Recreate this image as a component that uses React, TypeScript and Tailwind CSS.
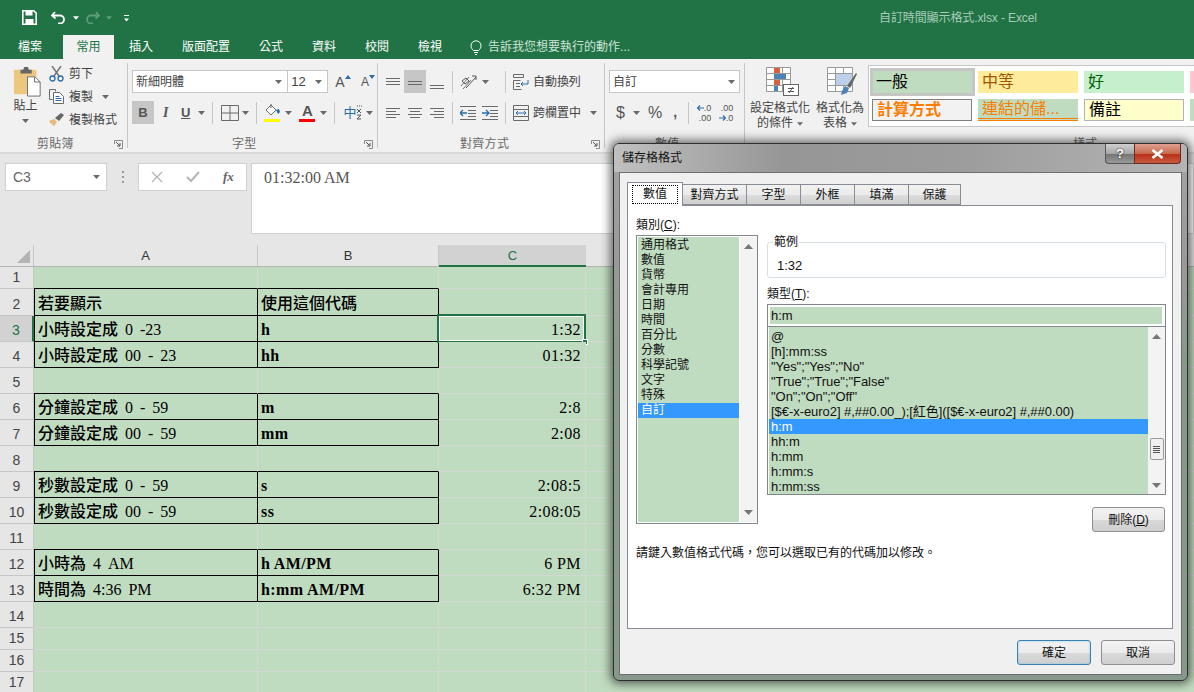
import React from "react";

const Caret = ({ c = "#6a6a6a", w = 7, className = "" }: { c?: string; w?: number; className?: string }) => (
  <svg width={w} height={4} viewBox="0 0 7 4" className={"shrink-0 " + className}>
    <path d="M0 0h7L3.5 4z" fill={c} />
  </svg>
);

const Lines = ({ l, w = 16, h = 16, c = "#6a6a6a" }: { l: number[][]; w?: number; h?: number; c?: string }) => (
  <svg width={w} height={h} viewBox={`0 0 ${w} ${h}`} className="shrink-0">
    {l.map((a, i) => (
      <rect key={i} x={a[0]} y={a[2]} width={a[1] - a[0]} height={1} fill={c} />
    ))}
  </svg>
);

const VSep = ({ ml, mr, h = 22 }: { ml: string; mr: string; h?: number }) => (
  <div className={`w-px bg-[#c6c6c6] shrink-0 ${ml} ${mr}`} style={{ height: h }} />
);

const Launcher = () => (
  <svg width={9} height={9} viewBox="0 0 9 9" className="shrink-0">
    <path d="M.5 4V.5H8.5V8.5H5" fill="none" stroke="#8a8a8a" />
    <path d="M2 2l4 4M6 3v3H3" fill="none" stroke="#555" />
  </svg>
);

const GroupLabel = ({ t, launcher, ml }: { t: string; launcher?: boolean; ml: string }) => (
  <div className="mt-auto h-[18px] pt-[1px] flex items-center text-[12px] leading-[18px] text-[#6a6a6a]">
    <span className={ml + " tracking-[0.3px]"}>{t}</span>
    {launcher && <span className="ml-auto mr-[4px] mt-[2px] flex"><Launcher /></span>}
  </div>
);

const Sep = () => <div className="w-px h-[85px] mt-[4px] bg-[#c6c6c6] shrink-0" />;

const rows = [
  { n: 1, h: 22, above: true },
  { n: 2, h: 27, box: true, a: "若要顯示", b: "使用這個代碼" },
  { n: 3, h: 26, box: true, a: "小時設定成 0 -23", b: "h", c: "1:32", sel: true },
  { n: 4, h: 26, box: true, a: "小時設定成 00 - 23", b: "hh", c: "01:32" },
  { n: 5, h: 26, above: true },
  { n: 6, h: 26, box: true, a: "分鐘設定成 0 - 59", b: "m", c: "2:8" },
  { n: 7, h: 26, box: true, a: "分鐘設定成 00 - 59", b: "mm", c: "2:08" },
  { n: 8, h: 26, above: true },
  { n: 9, h: 26, box: true, a: "秒數設定成 0 - 59", b: "s", c: "2:08:5" },
  { n: 10, h: 26, box: true, a: "秒數設定成 00 - 59", b: "ss", c: "2:08:05" },
  { n: 11, h: 26, above: true },
  { n: 12, h: 26, box: true, a: "小時為 4 AM", b: "h AM/PM", c: "6 PM" },
  { n: 13, h: 26, box: true, a: "時間為 4:36 PM", b: "h:mm AM/PM", c: "6:32 PM" },
  { n: 14, h: 26 },
  { n: 15, h: 22 },
  { n: 16, h: 22 },
  { n: 17, h: 22 },
];

const categories = ["通用格式", "數值", "貨幣", "會計專用", "日期", "時間", "百分比", "分數", "科學記號", "文字", "特殊", "自訂"];
const types = [
  "@",
  "[h]:mm:ss",
  '"Yes";"Yes";"No"',
  '"True";"True";"False"',
  '"On";"On";"Off"',
  "[$€-x-euro2] #,##0.00_);[紅色]([$€-x-euro2] #,##0.00)",
  "h:m",
  "hh:m",
  "h:mm",
  "h:mm:s",
  "h:mm:ss",
];
const tabs = [
  ["對齊方式", "w-[64px]"],
  ["字型", "w-[54px]"],
  ["外框", "w-[54px]"],
  ["填滿", "w-[54px]"],
  ["保護", "w-[52px]"],
];

const Arrow = ({ up }: { up?: boolean }) => (
  <svg width={9} height={5} viewBox="0 0 9 5">
    <path d={up ? "M0 5h9L4.5 0z" : "M0 0h9L4.5 5z"} fill="#777" />
  </svg>
);

const DlgButton = ({ children, cls }: { children: React.ReactNode; cls: string }) => (
  <div className={`h-[25px] rounded-[3px] border flex items-center justify-center text-[12px] text-[#111] bg-[linear-gradient(#f2f2f2_0%,#ebebeb_50%,#d9d9d9_52%,#cfcfcf_100%)] ${cls}`}>
    {children}
  </div>
);

export default function App() {
  return (
    <div lang="zh-Hant" className="w-[1194px] h-[692px] overflow-hidden relative bg-[#e6e6e6] text-[12px] font-['Liberation_Sans','Noto_Sans_CJK_TC',sans-serif]">
      {/* Title bar */}
      <div className="h-[35px] bg-[#217346] flex items-center text-white">
        <svg width={15} height={15} viewBox="0 0 15 15" className="ml-[22px]">
          <path d="M.8.8h11l2.4 2.4v11H.8z" fill="none" stroke="#fff" strokeWidth="1.6" />
          <rect x="3.5" y="1" width="7" height="4.5" fill="#fff" />
          <rect x="3.5" y="9" width="8" height="5" fill="#fff" />
        </svg>
        <svg width={15} height={13} viewBox="0 0 15 13" className="ml-[14px]">
          <path d="M4 1L1 4.5 4.5 7.5M1.5 4.5H9a4 4 0 0 1 0 8H7" fill="none" stroke="#fff" strokeWidth="1.8" />
        </svg>
        <Caret c="#fff" w={6} className="ml-[7px]" />
        <svg width={15} height={13} viewBox="0 0 15 13" className="ml-[6px]">
          <path d="M11 1l3 3.5-3.5 3M13.5 4.500H6a4 4 0 0 0 0 8h2" fill="none" stroke="#5c9c7b" strokeWidth="1.8" />
        </svg>
        <Caret c="#5c9c7b" w={6} className="ml-[6px]" />
        <div className="ml-[12px] flex flex-col items-center gap-[2px] mt-[2px]">
          <div className="w-[5px] h-px bg-white" />
          <Caret c="#fff" w={5} />
        </div>
        <div className="ml-[750px] text-[12px] text-[#a6cdb7] tracking-[-0.1px]">自訂時間顯示格式.xlsx - Excel</div>
      </div>
      {/* Tabs */}
      <div className="h-[24px] bg-[#217346] flex items-center text-white text-[12px]">
        <span className="ml-[18px]">檔案</span>
        <span className="ml-[21px] w-[51px] h-[24px] bg-[#f1f1f1] text-[#217346] flex items-center justify-center">常用</span>
        <span className="ml-[15px]">插入</span>
        <span className="ml-[29px]">版面配置</span>
        <span className="ml-[29px]">公式</span>
        <span className="ml-[29px]">資料</span>
        <span className="ml-[29px]">校閱</span>
        <span className="ml-[29px]">檢視</span>
        <svg width={12} height={15} viewBox="0 0 12 15" className="ml-[28px]">
          <path d="M3.500 10.500C2 9 1 8 1 5.800a5 5 0 0 1 10 0C11 8 10 9 8.500 10.500zM4 12.500h4M5 14.500h2" fill="none" stroke="#fff" />
        </svg>
        <span className="ml-[6px] text-[#cfe3d8]">告訴我您想要執行的動作...</span>
      </div>
      {/* Ribbon */}
      <div className="h-[93px] bg-[#f1f1f1] flex text-[#444] overflow-hidden">
        {/* Clipboard */}
        <div className="w-[127px] flex flex-col shrink-0">
          <div className="flex pt-[3px]">
            <div className="w-[49px] flex flex-col items-center">
              <svg width={29} height={30} viewBox="0 0 29 32" className="ml-[5px] mt-[5px]">
                <rect x="0" y="3" width="24" height="26" rx="1" fill="#edc77f" />
                <path d="M7 3h3l1-3h4l1 3h3v4H7z" fill="#666" />
                <path d="M14.500 10.500h8l5.500 5.500v15H14.500z" fill="#fff" stroke="#6a6a6a" />
                <path d="M22 11v5h6" fill="none" stroke="#6a6a6a" />
              </svg>
              <span className="ml-[2px] mt-[1px] text-[12px] leading-[16px] text-[#444]">貼上</span>
              <Caret className="mt-[5px] ml-[2px]" />
            </div>
            <div className="flex flex-col">
              <div className="h-[23px] flex items-center">
                <svg width={15} height={16} viewBox="0 0 15 16">
                  <path d="M3 0l7 10M12 0L5 10" stroke="#777" strokeWidth="1.500" fill="none" />
                  <circle cx="3.500" cy="12.500" r="2.500" fill="none" stroke="#2b6ca8" strokeWidth="1.300" />
                  <circle cx="11.500" cy="12.500" r="2.500" fill="none" stroke="#2b6ca8" strokeWidth="1.300" />
                </svg>
                <span className="ml-[5px]">剪下</span>
              </div>
              <div className="h-[23px] flex items-center">
                <svg width={15} height={15} viewBox="0 0 15 15">
                  <path d="M.5.500h6v2M.5.500v10h3" fill="none" stroke="#6a6a6a" />
                  <path d="M4.500 3.500h6l4 4v7h-10z" fill="#fff" stroke="#6a6a6a" />
                  <path d="M6.500 7.500h4M6.500 9.500h6M6.500 11.500h6" stroke="#2b6ca8" />
                </svg>
                <span className="ml-[5px]">複製</span>
                <Caret className="ml-[9px]" />
              </div>
              <div className="h-[23px] flex items-center">
                <svg width={16} height={15} viewBox="0 0 16 15">
                  <path d="M0 9l5-2 3 3-3 4-2-1 1-2-2 1z" fill="#e4b877" />
                  <path d="M6 6l6-5 3 2-5 6z" fill="#666" />
                </svg>
                <span className="ml-[4px]">複製格式</span>
              </div>
            </div>
          </div>
          <GroupLabel t="剪貼簿" ml="ml-[37px]" launcher />
        </div>
        <Sep />
        {/* Font */}
        <div className="w-[249px] flex flex-col shrink-0">
          <div className="flex items-center mt-[11px] h-[23px]">
            <div className="ml-[4px] w-[157px] h-[23px] bg-white border border-[#c6c6c6] flex items-center pl-[3px] pr-[5px]">
              <span>新細明體</span>
              <Caret className="ml-auto" />
            </div>
            <div className="w-[40px] h-[23px] bg-white border border-[#c6c6c6] border-l-0 flex items-center pl-[3px] pr-[5px]">
              <span className="text-[13px]">12</span>
              <Caret className="ml-auto" />
            </div>
            <div className="ml-[7px] w-[16px] h-[16px] flex items-start text-[#555] text-[14px] leading-[16px]">A<svg width={6} height={4} viewBox="0 0 6 4" className="mt-[1px]"><path d="M0 4h6L3 0z" fill="#2b6ca8" /></svg></div>
            <div className="ml-[10px] w-[16px] flex items-start text-[#555] text-[12px] leading-[16px]">A<svg width={6} height={4} viewBox="0 0 6 4" className="mt-[1px]"><path d="M0 0h6L3 4z" fill="#2b6ca8" /></svg></div>
          </div>
          <div className="flex items-center mt-[8px] h-[23px]">
            <div className="ml-[4px] w-[22px] h-[23px] bg-[#c6c6c6] flex items-center justify-center font-bold text-[13px] text-[#555]">B</div>
            <span className="ml-[9px] w-[8px] italic font-bold text-[14px] font-['Liberation_Serif',serif] text-[#555]">I</span>
            <span className="ml-[10px] underline font-bold text-[13px] text-[#555]">U</span>
            <Caret className="ml-[8px]" />
            <VSep ml="ml-[7px]" mr="mr-[8px]" />
            <svg width={18} height={16} viewBox="0 0 18 16">
              <path d="M.5.500h17v15H.5zM9 .5v15M.5 8h17" fill="none" stroke="#6a6a6a" />
            </svg>
            <Caret className="ml-[3px]" />
            <VSep ml="ml-[7px]" mr="mr-[7px]" />
            <div className="flex flex-col items-center w-[16px]">
              <svg width={16} height={14} viewBox="0 0 16 14">
                <path d="M7 1l5 5-5 5-5-5z" fill="#fff" stroke="#6a6a6a" />
                <path d="M7 0v4" stroke="#6a6a6a" />
                <path d="M12 6l3-1 1 3-2 2z" fill="#2b6ca8" />
              </svg>
              <div className="w-[16px] h-[3px] bg-[#ffff00] mt-[1px]" />
            </div>
            <Caret className="ml-[5px]" />
            <div className="ml-[7px] flex flex-col items-center w-[16px]">
              <span className="h-[14px] leading-[14px] text-[15px] text-[#555] font-bold">A</span>
              <div className="w-[16px] h-[3px] bg-[#ff0000] mt-[1px]" />
            </div>
            <Caret className="ml-[5px]" />
            <VSep ml="ml-[7px]" mr="mr-[8px]" />
            <span className="text-[#2b6ca8] text-[13px] leading-[16px]">中</span>
            <svg width={5} height={15} viewBox="0 0 5 15" className="ml-px">
              <path d="M0 1h1M2 1h1M4 1h1M0 4l4 4M4 4L0 8M0 10h4L0 14h4" stroke="#555" fill="none" />
            </svg>
            <Caret className="ml-[4px]" />
          </div>
          <GroupLabel t="字型" ml="ml-[104px]" launcher />
        </div>
        <Sep />
        {/* Alignment */}
        <div className="w-[226px] flex flex-col shrink-0">
          <div className="flex items-center mt-[11px] h-[23px]">
            <div className="ml-[8px] w-[14px]"><Lines w={14} l={[[0, 14, 4], [0, 14, 7], [0, 14, 10]]} /></div>
            <div className="ml-[4px] w-[22px] h-[23px] bg-[#c6c6c6] flex items-center justify-center"><Lines w={14} l={[[0, 14, 7], [0, 14, 10]]} /></div>
            <div className="ml-[4px] w-[14px]"><Lines w={14} l={[[0, 14, 11], [0, 14, 14]]} /></div>
            <VSep ml="ml-[8px]" mr="mr-[7px]" />
            <svg width={17} height={16} viewBox="0 0 17 16">
              <path d="M1 12L9 3M3 15L11 6" stroke="#777" fill="none" />
              <path d="M2 7l4-3 3 3-4 3z" fill="none" stroke="#555" />
              <path d="M6 14L16 3M12 2h4v4" stroke="#555" fill="none" />
            </svg>
            <Caret className="ml-[5px]" />
            <VSep ml="ml-[16px]" mr="mr-[7px]" />
            <svg width={16} height={16} viewBox="0 0 16 16">
              <path d="M.5.500h10v3H.5zM.5 6.500h7M.5 6.500v9h8M3 9.500h4M3 12.500h4" stroke="#6a6a6a" fill="none" />
              <path d="M15 6v4H8M10 8l-2 2 2 2" stroke="#2b6ca8" fill="none" />
            </svg>
            <span className="ml-[4px] tracking-[-0.05px]">自動換列</span>
          </div>
          <div className="flex items-center mt-[8px] h-[23px]">
            <div className="ml-[8px] w-[14px]"><Lines w={14} l={[[0, 14, 3], [0, 10, 6], [0, 14, 9], [0, 10, 12]]} /></div>
            <div className="ml-[8px] w-[14px]"><Lines w={14} l={[[0, 14, 3], [2, 12, 6], [0, 14, 9], [2, 12, 12]]} /></div>
            <div className="ml-[8px] w-[14px]"><Lines w={14} l={[[0, 14, 3], [4, 14, 6], [0, 14, 9], [4, 14, 12]]} /></div>
            <VSep ml="ml-[8px]" mr="mr-[7px]" />
            <svg width={16} height={14} viewBox="0 0 16 14">
              <path d="M0 7h7M3 4L0 7l3 3" stroke="#2b6ca8" fill="none" strokeWidth="1.300" />
              <path d="M0 .5h16M8 4.500h8M8 7.500h8M8 10.500h8M0 13.500h16" stroke="#6a6a6a" fill="none" />
            </svg>
            <svg width={16} height={14} viewBox="0 0 16 14" className="ml-[6px]">
              <path d="M0 7h7M4 4l3 3-3 3" stroke="#2b6ca8" fill="none" strokeWidth="1.300" />
              <path d="M0 .5h16M8 4.500h8M8 7.500h8M8 10.500h8M0 13.500h16" stroke="#6a6a6a" fill="none" />
            </svg>
            <VSep ml="ml-[7px]" mr="mr-[7px]" />
            <svg width={16} height={16} viewBox="0 0 16 16">
              <path d="M.5.500h15v15H.5zM.5 4.500h15M.5 11.500h15" stroke="#6a6a6a" fill="none" />
              <path d="M3 8h10M5 6L3 8l2 2M11 6l2 2-2 2" stroke="#2b6ca8" fill="none" />
            </svg>
            <span className="ml-[4px]">跨欄置中</span>
            <Caret className="ml-[9px]" />
          </div>
          <GroupLabel t="對齊方式" ml="ml-[82px]" launcher />
        </div>
        <Sep />
        {/* Number */}
        <div className="w-[139px] flex flex-col shrink-0">
          <div className="ml-[4px] mt-[11px] w-[131px] h-[23px] bg-white border border-[#c6c6c6] flex items-center pl-[3px] pr-[4px] shrink-0">
            <span>自訂</span>
            <Caret className="ml-auto" />
          </div>
          <div className="flex items-center mt-[8px] h-[23px]">
            <span className="ml-[11px] text-[16px] text-[#555]">$</span>
            <Caret className="ml-[8px]" />
            <span className="ml-[8px] text-[16px] text-[#555]">%</span>
            <span className="ml-[11px] w-[4px] text-[14px] font-bold text-[#555]">,</span>
            <VSep ml="ml-[11px]" mr="mr-[8px]" />
            <div className="w-[14px] flex flex-col items-end leading-[10px] text-[9px] text-[#555]">
              <span className="h-[10px] flex items-center">
                <svg width={7} height={6} viewBox="0 0 7 6"><path d="M7 3H1M3 .5L.5 3 3 5.500" stroke="#2b6ca8" fill="none" strokeWidth="1.200" /></svg>
                .0
              </span>
              <span className="h-[10px]">.00</span>
            </div>
            <div className="ml-[8px] w-[14px] flex flex-col items-end leading-[10px] text-[9px] text-[#555]">
              <span className="h-[10px]">.00</span>
              <span className="h-[10px] flex items-center">
                <svg width={7} height={6} viewBox="0 0 7 6"><path d="M0 3h6M4 .5L6.500 3 4 5.500" stroke="#2b6ca8" fill="none" strokeWidth="1.200" /></svg>
                .0
              </span>
            </div>
          </div>
          <GroupLabel t="數值" ml="ml-[50px]" />
        </div>
        <Sep />
        {/* Styles */}
        <div className="flex-1 flex flex-col min-w-0">
          <div className="flex">
            <div className="w-[64px] mt-[8px] ml-[3px] flex flex-col items-center shrink-0">
              <svg width={34} height={29} viewBox="0 0 34 29" className="ml-[6px]">
                <path d="M.5.500h24v24H.5zM.5 6.500h24M.5 12.500h24M.5 18.500h24M8.500.5v24M16.500.5v24" stroke="#999" fill="#fff" />
                <rect x="8" y="1" width="6" height="5" fill="#d8613c" />
                <rect x="8" y="7" width="12" height="5" fill="#4d82b8" />
                <rect x="8" y="13" width="6" height="5" fill="#d8613c" />
                <rect x="8" y="19" width="4" height="5" fill="#4d82b8" />
                <rect x="17.500" y="17.500" width="15" height="11" fill="#fff" stroke="#666" />
                <path d="M22 21.500h6M22 24.500h6M27 20l-4 6" stroke="#555" fill="none" />
              </svg>
              <span className="mt-[5px] leading-[15px] whitespace-nowrap">設定格式化</span>
              <span className="leading-[15px] flex items-center gap-[4px]">的條件<Caret w={6} /></span>
            </div>
            <div className="w-[54px] ml-[1px] mt-[8px] flex flex-col items-center shrink-0">
              <svg width={30} height={29} viewBox="0 0 30 29" className="ml-[4px]">
                <path d="M.5.500h25v24H.5zM.5 6.500h25M.5 12.500h25M.5 18.500h25M8.500.5v24M16.500.5v24" stroke="#999" fill="#fff" />
                <rect x="9" y="7" width="16" height="11" fill="#bdd0e8" />
                <path d="M15 24l3-5 4 2-2 5-6 2z" fill="#4d82b8" />
                <path d="M20 19l9-13 1 1-7 14z" fill="#666" />
              </svg>
              <span className="mt-[5px] leading-[15px] whitespace-nowrap">格式化為</span>
              <span className="leading-[15px] flex items-center gap-[4px]">表格<Caret w={6} /></span>
            </div>
            <div className="ml-px mt-[6px] flex-1 min-w-0 h-[62px] bg-white border border-[#c6c6c6] border-r-0 overflow-hidden pt-[2px]">
              <div className="grid grid-cols-[106px_106px_106px_106px] grid-rows-[28px_28px] text-[16px] leading-[22px] w-[424px]">
                <div className="ml-px border-[3px] border-[#c6c6c6] bg-[#c0dcc0] pl-[3px] text-black">一般</div>
                <div className="m-[3px] bg-[#ffeb9c] pl-[4px] text-[#9c5700]">中等</div>
                <div className="m-[3px] bg-[#c6efce] pl-[4px] text-[#006100]">好</div>
                <div className="m-[3px] bg-[#ffc7ce]" />
                <div className="m-[3px] bg-[#f2f2f2] border border-[#7f7f7f] pl-[4px] font-bold text-[#fa7d00] leading-[20px]">計算方式</div>
                <div className="m-[3px] bg-[#c0dcc0] border-b-[3px] border-double border-[#fa7d00] pl-[4px] text-[#fa7d00] leading-[19px]">連結的儲...</div>
                <div className="m-[3px] bg-[#ffffcc] border border-[#b2b2b2] pl-[4px] text-black leading-[20px]">備註</div>
                <div className="m-[3px] bg-[#c0dcc0]" />
              </div>
            </div>
          </div>
          <GroupLabel t="樣式" ml="ml-[328px]" />
        </div>
      </div>
      {/* Formula bar */}
      <div className="h-[93px] border-t-2 border-[#d9d9d9] bg-[#e6e6e6] flex items-start pt-[9px] text-[#444]">
        <div className="ml-[5px] w-[102px] h-[28px] bg-white border border-[#d0d0d0] flex items-center pl-[7px] pr-[6px] text-[14px] text-[#666]">
          <span>C3</span>
          <Caret className="ml-auto" />
        </div>
        <div className="ml-[14px] mt-[8px] w-[4px] flex flex-col gap-[3px] items-center">
          <div className="w-[2px] h-[2px] bg-[#999]" />
          <div className="w-[2px] h-[2px] bg-[#999]" />
          <div className="w-[2px] h-[2px] bg-[#999]" />
        </div>
        <div className="ml-[13px] w-[109px] h-[28px] bg-white border border-[#d0d0d0] flex items-center">
          <svg width={12} height={12} viewBox="0 0 12 12" className="ml-[12px]">
            <path d="M1 1l10 10M11 1L1 11" stroke="#b5b5b5" strokeWidth="1.400" />
          </svg>
          <svg width={14} height={12} viewBox="0 0 14 12" className="ml-[23px]">
            <path d="M1 6l4 4 8-9" stroke="#b5b5b5" strokeWidth="2" fill="none" />
          </svg>
          <span className="ml-[23px] italic font-bold font-['Liberation_Serif',serif] text-[13px] text-[#666]">fx</span>
        </div>
        <div className="ml-[4px] flex-1 h-[71px] bg-white border border-[#d0d0d0] pl-[12px] pt-[5px] font-['Liberation_Serif',serif] text-[16px] leading-[18px] text-[#555]">
          01:32:00 AM
        </div>
      </div>
      {/* Column header */}
      <div className="h-[22px] flex text-[#333] text-[13px] leading-[22px] bg-[#e6e6e6] border-b border-[#b5b5b5]">
        <div className="w-[34px] border-r border-[#c6c6c6] flex items-end justify-end pr-[3px] pb-[3px]">
          <svg width={13} height={13} viewBox="0 0 13 13"><path d="M13 0v13H0z" fill="#b4b4b4" /></svg>
        </div>
        <div className="w-[224px] border-r border-[#c6c6c6] text-center">A</div>
        <div className="w-[181px] border-r border-[#c6c6c6] text-center">B</div>
        <div className="w-[147px] bg-[#d2d2d2] border-b-2 border-[#217346] text-center text-[#217346] h-[22px]">C</div>
        <div className="flex-1" />
      </div>
      {/* Grid */}
      <div className="flex flex-col">
        {rows.map((r) => (
          <div key={r.n} className="flex shrink-0" style={{ height: r.h }}>
            <div
              className={
                "w-[34px] shrink-0 flex items-end justify-center pb-[1px] text-[14px] leading-[20px] border-b border-[#c6c6c6] border-r " +
                (r.sel ? "bg-[#d2d2d2] text-[#217346] border-r-2 border-r-[#217346]" : "bg-[#e6e6e6] text-[#444] border-r-[#c6c6c6]")
              }
            >
              {r.n}
            </div>
            <div
              className={
                "w-[224px] shrink-0 bg-[#c0dcc0] border-r border-b pl-[3px] flex items-end pb-[1px] text-[16px] leading-[20px] font-medium [word-spacing:3px] text-black font-['Liberation_Serif','Noto_Sans_CJK_TC',serif] whitespace-nowrap " +
                (r.box ? "border-black " : r.above ? "border-r-[#d4d8d4] border-b-black " : "border-[#d4d8d4] ") +
                (r.box ? "border-l border-l-black" : "")
              }
            >
              {r.a}
            </div>
            <div
              className={
                "w-[181px] shrink-0 bg-[#c0dcc0] border-r border-b pl-[3px] flex items-end pb-[1px] text-[16px] leading-[20px] text-black font-['Liberation_Serif','Noto_Sans_CJK_TC',serif] whitespace-nowrap " +
                (r.box ? "border-black" : r.above ? "border-r-[#d4d8d4] border-b-black" : "border-[#d4d8d4]")
              }
            >
              <span className={r.n === 2 ? "font-medium" : "font-bold tracking-[0.4px]"}>{r.b}</span>
            </div>
            <div className="relative w-[147px] shrink-0 bg-[#c0dcc0] border-r border-b border-[#d4d8d4] flex items-end justify-end pr-[4px] pb-[1px] text-[16px] leading-[20px] text-black font-['Liberation_Serif',serif] tracking-[0.4px]">
              {r.c}
              {r.sel && (
                <>
                  <div className="absolute left-[-2px] top-[-2px] right-[-1px] bottom-[-2px] border-2 border-[#217346]">
                    <div className="h-full border border-white" />
                  </div>
                  <div className="absolute right-[-3px] bottom-[-4px] w-[6px] h-[6px] bg-[#217346] border border-white" />
                </>
              )}
            </div>
            <div className="flex-1 bg-[#c0dcc0] border-b border-[#d4d8d4]" />
          </div>
        ))}
      </div>

      {/* Dialog */}
      <div className="absolute left-[613px] top-[143px] w-[575px] h-[538px] rounded-[6px] border border-[#2e2e2e] shadow-[0_0_10px_3px_rgba(0,0,0,0.55)] bg-[linear-gradient(180deg,#a4a4a4_0%,#9a9a9a_20%,#87998a_40%,#87998a_100%)] flex flex-col px-[5px] pb-[5px]">
        <div className="h-[28px] flex items-start shrink-0 -mx-[5px] px-[5px] rounded-t-[5px] bg-[linear-gradient(90deg,#c0c0c0_0%,#969696_30%,#9c9c9c_60%,#b4b4b4_100%)]">
          <span className="ml-[3px] mt-[7px] text-[12px] leading-[15px] text-[#111]">儲存格格式</span>
          <div className="ml-auto mr-[1px] flex">
            <div className="w-[29px] h-[20px] rounded-bl-[4px] border border-t-0 border-r-0 border-[#555] bg-[linear-gradient(#d0d0d0_0%,#a8a8a8_50%,#777_55%,#999_100%)] flex items-center justify-center font-bold text-white text-[13px] [text-shadow:0_0_2px_#000]">
              ?
            </div>
            <div className="w-[47px] h-[20px] rounded-br-[4px] border border-t-0 border-[#6b2b20] bg-[linear-gradient(#e0a090_0%,#c86a50_50%,#b83218_55%,#c85a40_100%)] flex items-center justify-center">
              <svg width={13} height={10} viewBox="0 0 13 10">
                <path d="M1.500 1l10 8M11.500 1l-10 8" stroke="#fff" strokeWidth="2.600" />
              </svg>
            </div>
          </div>
        </div>
        <div className="flex-1 min-h-0 bg-[#f0f0f0] border border-[#6e6e6e] flex flex-col pl-[7px] pr-[7px]">
          {/* tab strip */}
          <div className="h-[32px] flex items-end shrink-0 text-[12px] text-[#111]">
            <div className="w-[56px] h-[24px] bg-white border border-b-0 border-[#898c95] -mb-px relative z-10 flex items-center justify-center">
              <span className="border border-dotted border-black px-[10px] leading-[15px] py-[1px] w-[46px] flex justify-center whitespace-nowrap">數值</span>
            </div>
            {tabs.map(([t, w]) => (
              <div key={t} className={`${w} h-[21px] border border-[#898c95] border-l-0 bg-[linear-gradient(#f2f2f2_0%,#ebebeb_50%,#dddddd_52%,#cfcfcf_100%)] flex items-center justify-center`}>
                {t}
              </div>
            ))}
          </div>
          {/* tab content */}
          <div className="w-[546px] h-[424px] border border-[#898c95] bg-white pl-[8px] pt-[11px] text-[#111] shrink-0">
            <div className="flex">
              <div className="w-[122px] shrink-0">
                <div className="h-[18px] pt-px leading-[15px]">類別(<span className="underline">C</span>):</div>
                <div className="h-[289px] border border-[#82878c] p-px pr-0 flex">
                  <div className="w-[101px] bg-[#c0dcc0] pl-[3px] pt-px leading-[15px]">
                    {categories.map((c) => (
                      <div key={c} className={"h-[15px] -ml-[3px] pl-[3px] " + (c === "自訂" ? "bg-[#3399ff] text-white" : "")}>
                        {c}
                      </div>
                    ))}
                  </div>
                  <div className="flex-1 bg-[#f3f3f3] ml-px flex flex-col items-center justify-between py-[7px]">
                    <Arrow up />
                    <Arrow />
                  </div>
                </div>
              </div>
              <div className="ml-[9px] w-[399px] shrink-0">
                <div className="relative mt-[25px] h-[36px] border border-[#d5dfe5] rounded-[3px] pl-[9px] pt-[15px] leading-[16px] text-[13px]">
                  <span className="absolute left-[5px] top-[-8px] bg-white px-[1px] leading-[15px] text-[12px]">範例</span>
                  1:32
                </div>
                <div className="mt-[9px] h-[17px] leading-[15px]">類型(<span className="underline">T</span>):</div>
                <div className="h-[23px] border border-[#82878c] p-[2px] pr-[3px]">
                  <div className="h-[17px] bg-[#c0dcc0] pl-[1px] leading-[17px] text-[13px]">h:m</div>
                </div>
                <div className="h-[169px] -mt-px border border-[#82878c] border-t-[#82878c] flex">
                  <div className="w-[379px] bg-[#c0dcc0] ml-px pt-[2px] leading-[15px] overflow-hidden text-[13px] tracking-[-0.05px]">
                    {types.map((t) => (
                      <div key={t} className={"h-[15px] pl-[2px] whitespace-nowrap " + (t === "h:m" ? "bg-[#3399ff] text-white" : "")}>
                        {t}
                      </div>
                    ))}
                  </div>
                  <div className="flex-1 bg-[#f3f3f3] flex flex-col items-center pt-[7px] pb-[6px]">
                    <Arrow up />
                    <div className="mt-[99px] w-[14px] h-[22px] rounded-[2px] border border-[#9a9a9a] bg-[#f0f0f0] flex flex-col items-center justify-center gap-[1px]">
                      <div className="w-[7px] h-px bg-[#555]" />
                      <div className="w-[7px] h-px bg-[#555]" />
                      <div className="w-[7px] h-px bg-[#555]" />
                      <div className="w-[7px] h-px bg-[#555]" />
                    </div>
                    <div className="mt-auto"><Arrow /></div>
                  </div>
                </div>
                <div className="flex justify-end mt-[12px] pr-[1px]">
                  <DlgButton cls="w-[73px] h-[24px] border-[#8e8f8f]">
                    刪除(<span className="underline">D</span>)
                  </DlgButton>
                </div>
              </div>
            </div>
            <div className="mt-[14px] leading-[15px]">請鍵入數值格式代碼，您可以選取已有的代碼加以修改。</div>
          </div>
          {/* buttons */}
          <div className="flex justify-end gap-[10px] mt-[11px] mr-[-1px]">
            <DlgButton cls="w-[74px] border-[#3c7fb1] shadow-[inset_0_0_2px_#6fc8f0]">確定</DlgButton>
            <DlgButton cls="w-[74px] border-[#8e8f8f]">取消</DlgButton>
          </div>
        </div>
      </div>
    </div>
  );
}
